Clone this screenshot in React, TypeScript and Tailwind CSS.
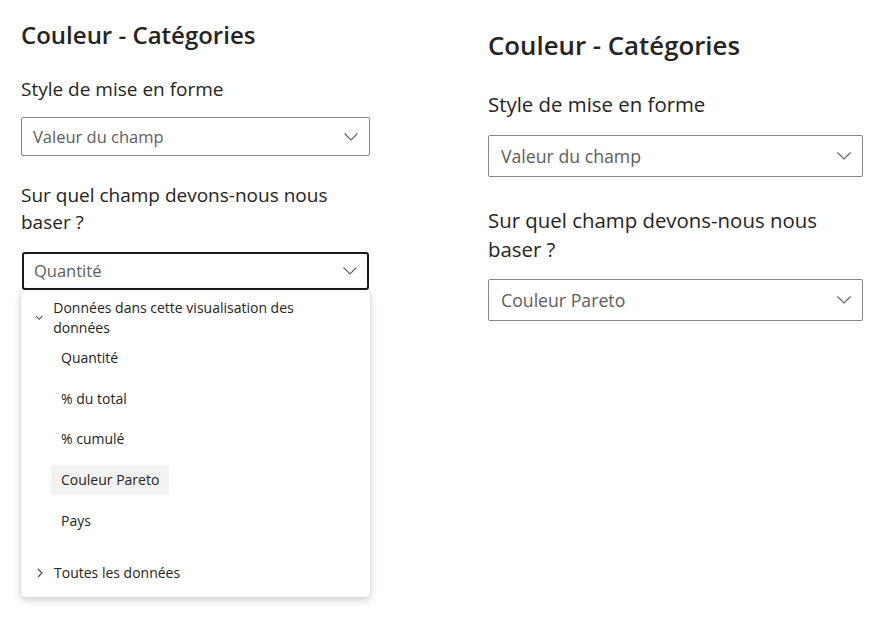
import { useState } from 'react'

function Chevron({ className }: { className?: string }) {
  return (
    <svg className={className} width="14" height="8" viewBox="0 0 14 8" fill="none">
      <polyline points="0.5,0.5 7,7 13.5,0.5" stroke="#605e5c" strokeWidth="1.1" />
    </svg>
  )
}

function SmallDown() {
  return (
    <svg width="9" height="6" viewBox="0 0 9 6" fill="none">
      <polyline points="1,1 4.5,4.5 8,1" stroke="#484644" strokeWidth="1.1" />
    </svg>
  )
}

function SmallRight() {
  return (
    <svg width="6" height="10" viewBox="0 0 6 10" fill="none">
      <polyline points="1,1 5,5 1,9" stroke="#484644" strokeWidth="1.1" />
    </svg>
  )
}

const fields = ['Quantité', '% du total', '% cumulé', 'Couleur Pareto', 'Pays']

export default function App() {
  const [selected] = useState('Couleur Pareto')

  return (
    <div className="flex h-[617px] w-[885px] bg-white text-[#252423] font-['Open_Sans',sans-serif]">
      {/* panneau ouvert */}
      <div className="ml-[21px] w-[349px] pt-[19px]">
        <h2 className="text-[24px] leading-[32px] font-semibold">Couleur - Catégories</h2>
        <p className="mt-[25px] text-[19px] leading-[27px]">Style de mise en forme</p>
        <div className="mt-[14px] flex h-[39px] items-center justify-between rounded-[2px] border border-[#8a8886] pl-[11px] pr-[11px]">
          <span className="text-[16.5px] leading-[22px] text-[#605e5c]">Valeur du champ</span>
          <Chevron />
        </div>
        <p className="mt-[26px] text-[19px] leading-[27px]">Sur quel champ devons-nous nous baser ?</p>
        <div className="mt-[16px] ml-px mr-px flex h-[38px] items-center justify-between rounded-[3px] border-2 border-[#1b1a19] pl-[10px] pr-[10px]">
          <span className="text-[16.5px] leading-[22px] text-[#605e5c]">Quantité</span>
          <Chevron />
        </div>
        <div className="rounded-[4px] bg-white pt-[8px] pb-[9px] shadow-[0_3px_8px_rgba(0,0,0,0.2),0_0_2px_rgba(0,0,0,0.12)]">
          <div className="flex items-center pl-[14px] pr-[40px]">
            <SmallDown />
            <span className="ml-[10px] text-[14px] leading-[20px]">Données dans cette visualisation des données</span>
          </div>
          <div className="mt-[5px] flex flex-col items-start gap-[10.7px] pl-[30px]">
            {fields.map((f) => (
              <div
                key={f}
                className={`h-[30px] px-[10px] text-[14px] leading-[30px] ${f === selected ? 'bg-[#f3f2f1]' : ''}`}
              >
                {f}
              </div>
            ))}
          </div>
          <div className="mt-[22px] flex h-[30px] items-center pl-[16px]">
            <SmallRight />
            <span className="ml-[11px] text-[14px] leading-[20px]">Toutes les données</span>
          </div>
        </div>
      </div>

      {/* panneau fermé */}
      <div className="ml-[118px] w-[375px] pt-[28px]">
        <h2 className="text-[25.8px] leading-[34px] font-semibold">Couleur - Catégories</h2>
        <p className="mt-[27.6px] text-[20.4px] leading-[29px]">Style de mise en forme</p>
        <div className="mt-[16.4px] flex h-[42px] items-center justify-between rounded-[2px] border border-[#8a8886] pl-[12px] pr-[11px]">
          <span className="text-[17.7px] leading-[24px] text-[#605e5c]">Valeur du champ</span>
          <Chevron />
        </div>
        <p className="mt-[28.6px] text-[20.4px] leading-[29px]">Sur quel champ devons-nous nous baser ?</p>
        <div className="mt-[15.4px] flex h-[42px] items-center justify-between rounded-[2px] border border-[#8a8886] pl-[12px] pr-[11px]">
          <span className="text-[17.7px] leading-[24px] text-[#605e5c]">Couleur Pareto</span>
          <Chevron />
        </div>
      </div>
    </div>
  )
}
